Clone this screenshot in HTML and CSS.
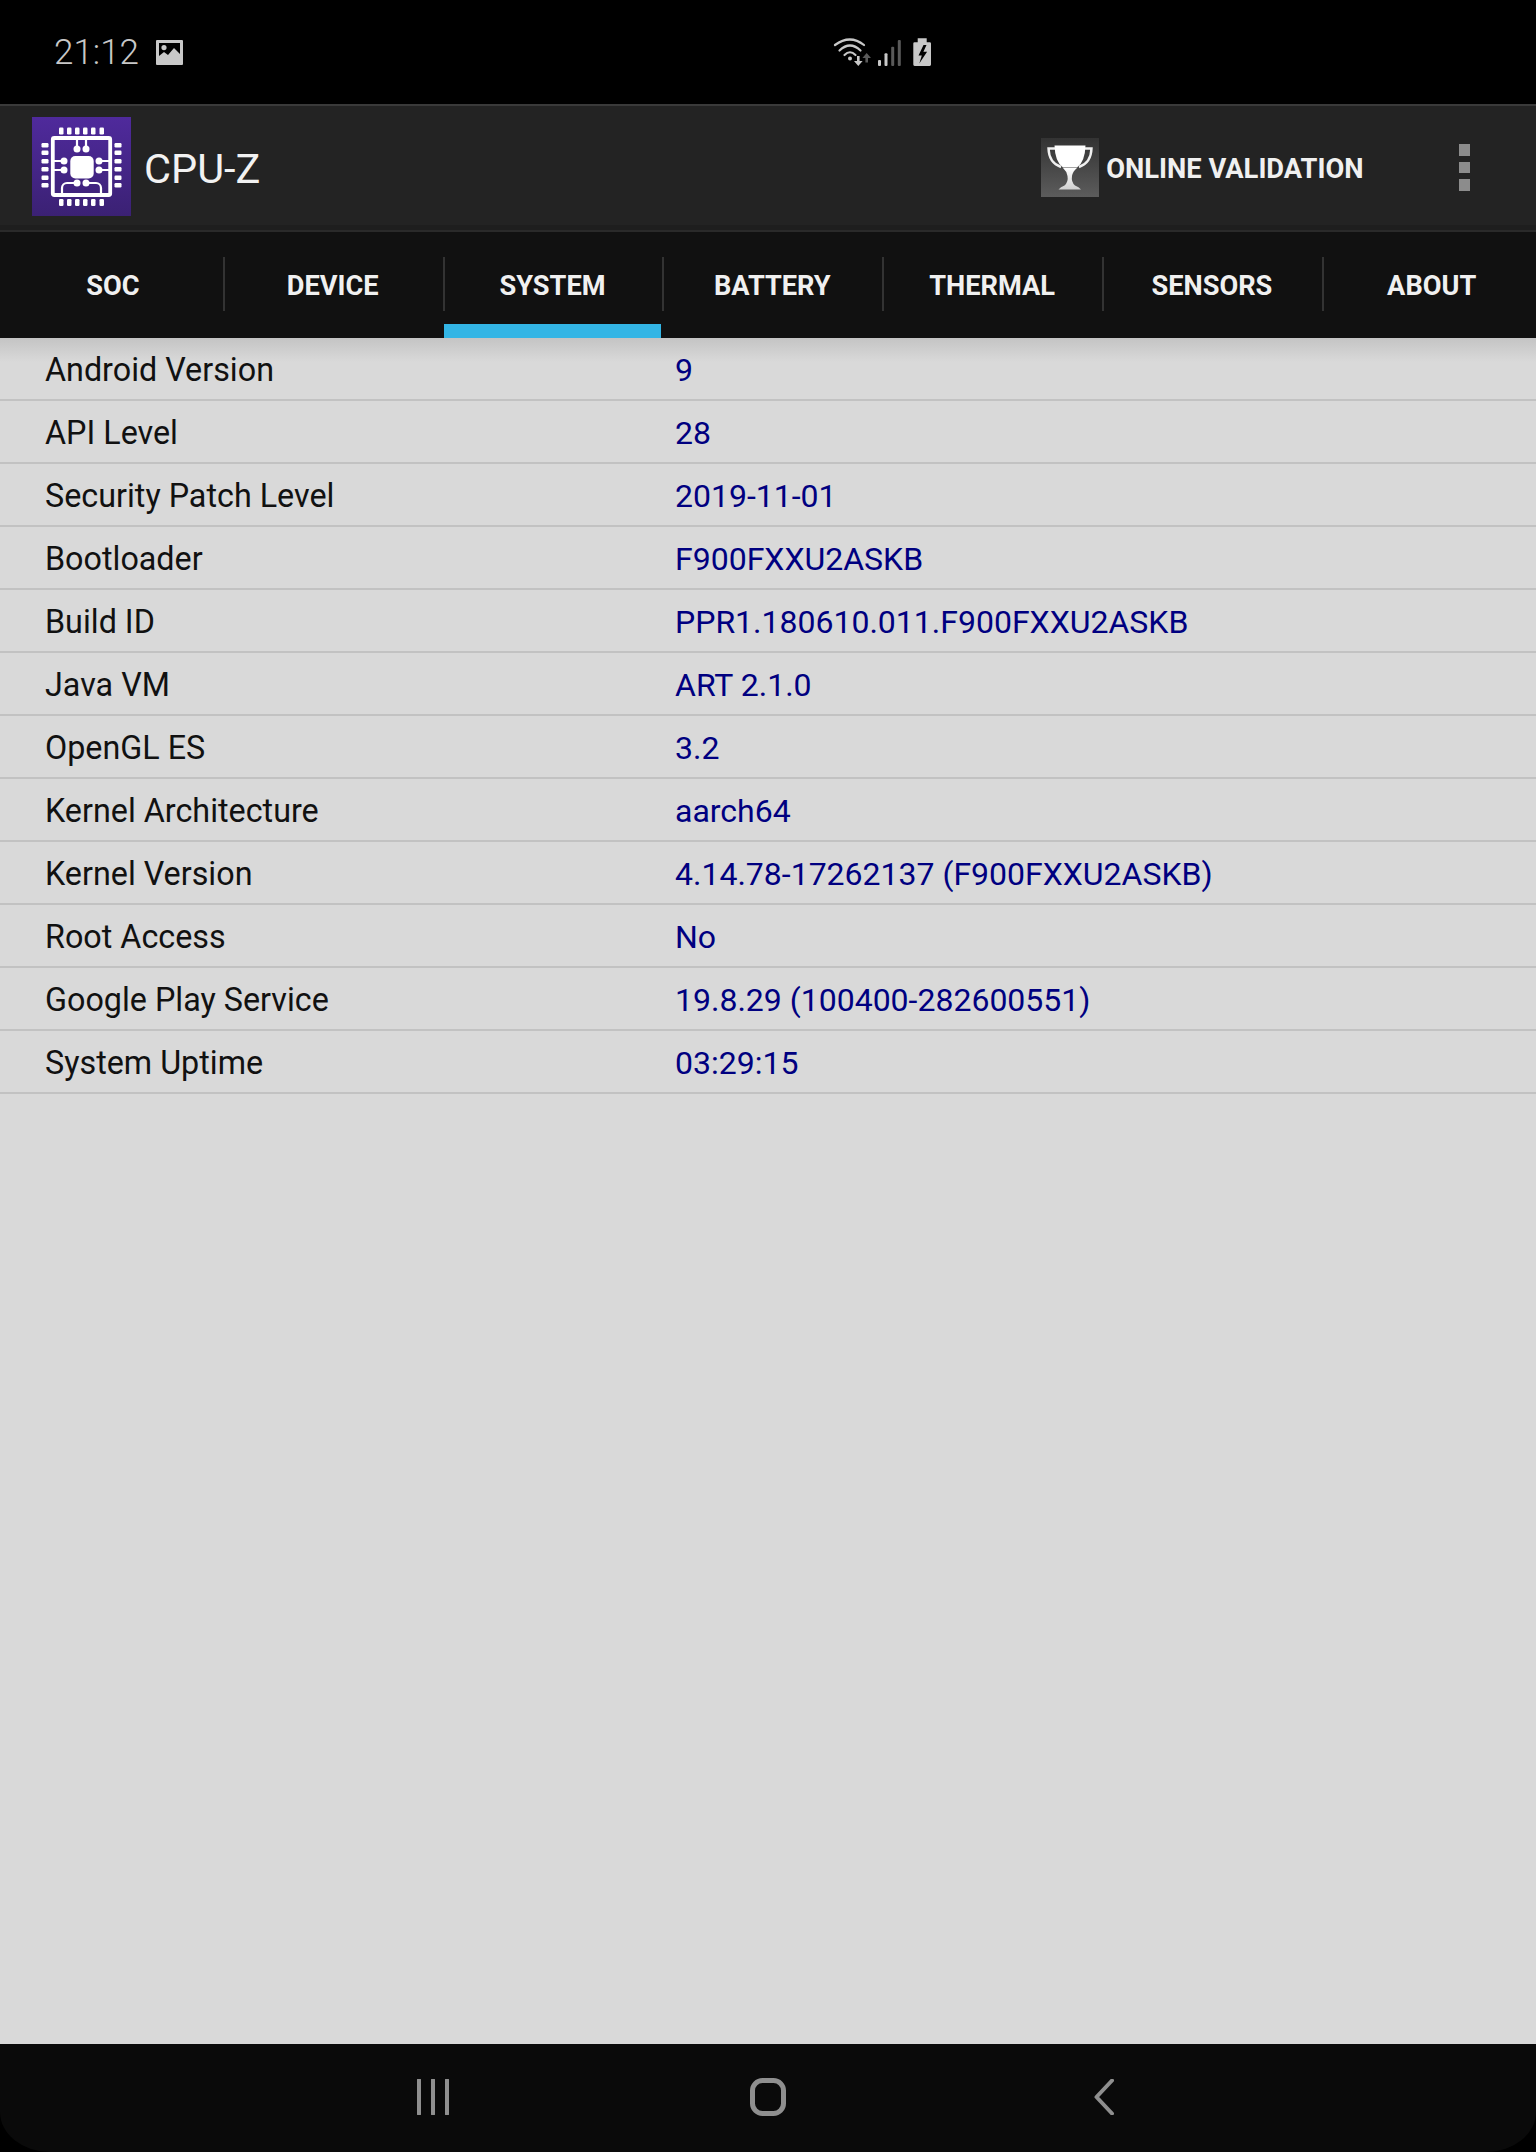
FILE: index.html
```html
<!DOCTYPE html>
<html lang="en">
<head>
  <meta charset="UTF-8">
  <meta name="viewport" content="width=device-width, initial-scale=1.0">
  <title>CPU-Z</title>
  <link rel="stylesheet" href="styles.css">
</head>
<body>
  <div class="status-bar">
    <span class="status-time">21:12</span>
    <svg class="status-image" viewBox="0 0 27 25">
      <path fill="#c8c8c8" fill-rule="evenodd" d="M1 0h25a1 1 0 0 1 1 1v23a1 1 0 0 1-1 1H1a1 1 0 0 1-1-1V1a1 1 0 0 1 1-1zM3 3v13l5-4 4 3 6-7 6 6V3zM8 5a2.6 2.6 0 1 1 0 5.2A2.6 2.6 0 0 1 8 5z"/>
    </svg>
    <svg class="status-icons" viewBox="0 0 100 30">
      <g fill="none" stroke="#c8c8c8" stroke-width="2.2" stroke-linecap="round">
        <path d="M2 8Q17-3 31 8"/>
        <path d="M6.500 13.500Q17 3.500 27.500 13.500"/>
        <path d="M11.500 18Q17 12.500 22.500 18"/>
        <path d="M25.300 19v6" stroke-width="2.600" stroke-linecap="butt"/>
      </g>
      <circle cx="17" cy="21.500" r="2" fill="#c8c8c8"/>
      <path d="M21 24h8.600l-4.300 5z" fill="#c8c8c8"/>
      <path d="M33.700 16l4.300 5h-3v4.500h-2.600V21h-3z" fill="#5a5a5a"/>
      <rect x="45" y="23" width="3" height="6" rx="1" fill="#c8c8c8"/>
      <rect x="51.500" y="16.300" width="3" height="12.700" rx="1" fill="#c8c8c8"/>
      <rect x="58.200" y="9.700" width="3" height="19.300" rx="1" fill="#5a5a5a"/>
      <rect x="64.800" y="3" width="3" height="26" rx="1" fill="#5a5a5a"/>
      <path d="M84.700 1.300h9v4h3a1.300 1.300 0 0 1 1.300 1.300v21a1.300 1.300 0 0 1-1.300 1.300H81.600a1.300 1.300 0 0 1-1.300-1.300v-21a1.300 1.300 0 0 1 1.300-1.300h3.100z" fill="#c8c8c8"/>
      <path d="M90.500 8l-5 10.500h3.300l-2.500 8 7.800-11.800h-3.700L93.500 8z" fill="#000"/>
    </svg>
  </div>

  <div class="app-bar">
    <svg class="app-logo" viewBox="0 0 99 99">
      <defs>
        <linearGradient id="logoBg" x1="0" y1="0" x2="0" y2="1">
          <stop offset="0" stop-color="#4f2a9c"/>
          <stop offset="1" stop-color="#3b2174"/>
        </linearGradient>
      </defs>
      <rect width="99" height="99" fill="url(#logoBg)"/>
      <g fill="#fff">
        <rect x="27" y="10.500" width="4.500" height="7" rx="1.200"/>
        <rect x="35" y="10.500" width="4.500" height="7" rx="1.200"/>
        <rect x="43" y="10.500" width="4.500" height="7" rx="1.200"/>
        <rect x="51" y="10.500" width="4.500" height="7" rx="1.200"/>
        <rect x="59" y="10.500" width="4.500" height="7" rx="1.200"/>
        <rect x="67.500" y="10.500" width="4.500" height="7" rx="1.200"/>
        <rect x="27" y="82" width="4.500" height="7" rx="1.200"/>
        <rect x="35" y="82" width="4.500" height="7" rx="1.200"/>
        <rect x="43" y="82" width="4.500" height="7" rx="1.200"/>
        <rect x="51" y="82" width="4.500" height="7" rx="1.200"/>
        <rect x="59" y="82" width="4.500" height="7" rx="1.200"/>
        <rect x="67.500" y="82" width="4.500" height="7" rx="1.200"/>
        <rect x="9.500" y="26" width="7" height="4.500" rx="1.200"/>
        <rect x="9.500" y="33.500" width="7" height="4.500" rx="1.200"/>
        <rect x="9.500" y="42" width="7" height="4.500" rx="1.200"/>
        <rect x="9.500" y="50" width="7" height="4.500" rx="1.200"/>
        <rect x="9.500" y="58.500" width="7" height="4.500" rx="1.200"/>
        <rect x="9.500" y="66" width="7" height="4.500" rx="1.200"/>
        <rect x="82.500" y="26" width="7" height="4.500" rx="1.200"/>
        <rect x="82.500" y="33.500" width="7" height="4.500" rx="1.200"/>
        <rect x="82.500" y="42" width="7" height="4.500" rx="1.200"/>
        <rect x="82.500" y="50" width="7" height="4.500" rx="1.200"/>
        <rect x="82.500" y="58.500" width="7" height="4.500" rx="1.200"/>
        <rect x="82.500" y="66" width="7" height="4.500" rx="1.200"/>
        <rect x="38.300" y="39" width="23.400" height="22.500" rx="5"/>
        <circle cx="45" cy="32" r="3.500"/>
        <circle cx="54" cy="32" r="3.500"/>
        <circle cx="32" cy="44" r="3.500"/>
        <circle cx="32" cy="53" r="3.500"/>
        <circle cx="67" cy="44" r="3.500"/>
        <circle cx="67" cy="53" r="3.500"/>
        <circle cx="45" cy="66" r="3.500"/>
        <circle cx="54" cy="66" r="3.500"/>
      </g>
      <g fill="none" stroke="#fff">
        <rect x="20.800" y="21" width="57.400" height="57" rx="1.500" stroke-width="3.800"/>
        <path stroke-width="2.200" d="M45 22v10M54 22v10M22 44h10M22 53h10M67 44h10M67 53h10M45 66h-10a5 5 0 0 0-5 5v7M54 66h10a5 5 0 0 1 5 5v7"/>
      </g>
    </svg>
    <span class="app-title">CPU-Z</span>
    <div class="validation">
      <svg class="trophy" viewBox="0 0 58 59">
        <defs>
          <linearGradient id="tileBg" x1="0" y1="0" x2="0" y2="1">
            <stop offset="0" stop-color="#333"/>
            <stop offset="1" stop-color="#5c5c5c"/>
          </linearGradient>
          <linearGradient id="cupFill" x1="0" y1="0" x2="0" y2="1">
            <stop offset="0" stop-color="#fff"/>
            <stop offset="1" stop-color="#cfcfcf"/>
          </linearGradient>
        </defs>
        <rect width="58" height="59" fill="url(#tileBg)"/>
        <path d="M14 10.500H7.500Q8 25 20 29M44 10.500h6.500Q50 25 38 29" fill="none" stroke="#f0f0f0" stroke-width="2.400"/>
        <path d="M13.500 7.500h31Q44 24 36 29.500H22Q14 24 13.500 7.500z" fill="#fff"/>
        <path d="M22 30h14q-4 3-5 8-1 6 3 9.500 4 1.500 6 4H17.500q2-2.500 6-4 4-3.500 3-9.500-1-5-4.500-8z" fill="url(#cupFill)"/>
      </svg>
      <span class="validation-label">ONLINE VALIDATION</span>
    </div>
    <div class="overflow-menu">
      <span class="overflow-dot"></span>
      <span class="overflow-dot"></span>
      <span class="overflow-dot"></span>
    </div>
  </div>

  <div class="tabs">
    <div class="tab">SOC</div>
    <div class="tab">DEVICE</div>
    <div class="tab active">SYSTEM</div>
    <div class="tab">BATTERY</div>
    <div class="tab">THERMAL</div>
    <div class="tab">SENSORS</div>
    <div class="tab">ABOUT</div>
  </div>

  <div class="content">
    <div class="row"><span class="row-label">Android Version</span><span class="row-value">9</span></div>
    <div class="row"><span class="row-label">API Level</span><span class="row-value">28</span></div>
    <div class="row"><span class="row-label">Security Patch Level</span><span class="row-value">2019-11-01</span></div>
    <div class="row"><span class="row-label">Bootloader</span><span class="row-value">F900FXXU2ASKB</span></div>
    <div class="row"><span class="row-label">Build ID</span><span class="row-value">PPR1.180610.011.F900FXXU2ASKB</span></div>
    <div class="row"><span class="row-label">Java VM</span><span class="row-value">ART 2.1.0</span></div>
    <div class="row"><span class="row-label">OpenGL ES</span><span class="row-value">3.2</span></div>
    <div class="row"><span class="row-label">Kernel Architecture</span><span class="row-value">aarch64</span></div>
    <div class="row"><span class="row-label">Kernel Version</span><span class="row-value">4.14.78-17262137 (F900FXXU2ASKB)</span></div>
    <div class="row"><span class="row-label">Root Access</span><span class="row-value">No</span></div>
    <div class="row"><span class="row-label">Google Play Service</span><span class="row-value">19.8.29 (100400-282600551)</span></div>
    <div class="row"><span class="row-label">System Uptime</span><span class="row-value">03:29:15</span></div>
  </div>

  <div class="nav-wrap">
    <div class="nav-bar">
      <svg class="nav-icon nav-recents" viewBox="0 0 34 36">
        <path d="M3 1v34M17 1v34M31 1v34" fill="none" stroke="#8f8f8f" stroke-width="4" stroke-linecap="round"/>
      </svg>
      <svg class="nav-icon nav-home" viewBox="0 0 36 38">
        <rect x="2.500" y="2.500" width="31" height="33" rx="10" fill="none" stroke="#8f8f8f" stroke-width="5"/>
      </svg>
      <svg class="nav-icon nav-back" viewBox="0 0 20 36">
        <path d="M18 1.500L2.500 18 18 34.500" fill="none" stroke="#8f8f8f" stroke-width="4" stroke-linecap="round" stroke-linejoin="round"/>
      </svg>
    </div>
  </div>
</body>
</html>
```

FILE: styles.css
```css
html, body {
  margin: 0;
  height: 100%;
}

body {
  font-family: 'Roboto', 'Liberation Sans', sans-serif;
  background-color: #000;
  display: flex;
  flex-direction: column;
  height: 100vh;
  overflow: hidden;
}

.status-bar {
  height: 104px;
  flex: none;
  display: flex;
  align-items: center;
  padding-left: 54px;
  color: #c8c8c8;
}

.status-time {
  font-size: 35px;
  font-weight: 300;
}

.status-image {
  width: 27px;
  height: 25px;
  margin-left: 17px;
  margin-top: 1px;
}

.status-icons {
  width: 100px;
  height: 30px;
  margin-left: 650px;
}

.app-bar {
  box-sizing: border-box;
  height: 126px;
  flex: none;
  display: flex;
  align-items: center;
  padding-left: 32px;
  padding-top: 2px;
  background-color: #232323;
  border-top: 2px solid #3a3a3a;
  border-bottom: 5px solid #1e1e1e;
  box-shadow: 0 2px 0 #2a2a2a;
  position: relative;
}

.app-logo {
  width: 99px;
  height: 99px;
}

.app-title {
  font-size: 41.500px;
  color: #f2f2f2;
  margin-left: 13px;
  margin-top: 4px;
}

.validation {
  display: flex;
  align-items: center;
  margin-left: auto;
  gap: 7px;
}

.trophy {
  width: 58px;
  height: 59px;
  margin-top: 2px;
}

.validation-label {
  font-size: 27.300px;
  font-weight: 700;
  color: #f0f0f0;
  margin-top: 4px;
}

.overflow-menu {
  display: flex;
  flex-direction: column;
  gap: 6px;
  margin: 2px 66px 0 95.500px;
}

.overflow-dot {
  width: 11px;
  height: 11.500px;
  background-color: #8c8c8c;
}

.tabs {
  height: 106px;
  flex: none;
  margin-top: 2px;
  display: flex;
  padding-left: 3px;
  background-color: #111;
  overflow: hidden;
}

.tab {
  flex: none;
  box-sizing: border-box;
  width: 219.800px;
  display: flex;
  align-items: center;
  justify-content: center;
  padding-top: 2px;
  font-size: 27.200px;
  font-weight: 700;
  color: #f0f0f0;
  position: relative;
}

.tab::after {
  content: "";
  position: absolute;
  right: -2px;
  top: 25px;
  height: 54px;
  width: 2px;
  background-color: #333;
}

.tab.active::before {
  content: "";
  position: absolute;
  left: 1px;
  right: 1px;
  bottom: 0;
  height: 14px;
  background-color: #33b5e5;
}

.content {
  flex: 1;
  background-color: #d9d9d9;
  background-image: linear-gradient(#c4c4c4, #d9d9d9 24px);
}

.row {
  box-sizing: border-box;
  height: 63px;
  display: flex;
  align-items: center;
  padding-left: 45px;
  padding-top: 2px;
  border-bottom: 2px solid #c2c2c2;
  font-size: 32px;
}

.row-label {
  width: 630px;
  flex: none;
  font-size: 32.300px;
  color: #111;
}

.row-value {
  color: #000080;
}

.nav-wrap {
  height: 108px;
  flex: none;
  background-color: #000;
}

.nav-bar {
  height: 100%;
  position: relative;
  background-color: #0a0a0a;
  border-radius: 0 0 50px 50px / 0 0 40px 40px;
}

.nav-icon {
  position: absolute;
}

.nav-recents {
  left: 416px;
  top: 35px;
  width: 34px;
  height: 36px;
}

.nav-home {
  left: 750px;
  top: 34px;
  width: 36px;
  height: 38px;
}

.nav-back {
  left: 1094px;
  top: 35px;
  width: 20px;
  height: 36px;
}
```
